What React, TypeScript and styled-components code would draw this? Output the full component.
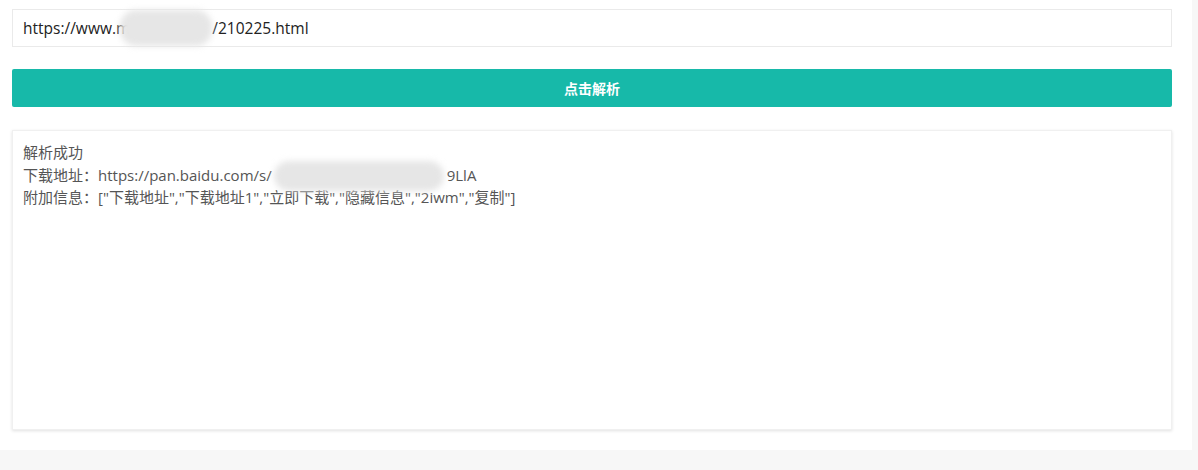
import React from "react";
import styled, { createGlobalStyle } from "styled-components";

const Global = createGlobalStyle`
  html, body { margin: 0; padding: 0; background: #f7f7f7; }
  body { font-family: "Open Sans", "Noto Sans CJK SC", sans-serif; }
`;

const Page = styled.div`
  width: 1198px;
  height: 470px;
  background: #f7f7f7;
`;

const Panel = styled.div`
  width: 1192px;
  height: 450px;
  background: #fff;
  box-sizing: border-box;
  padding: 9px 20px 0 12px;
  display: flex;
  flex-direction: column;
`;

const InputBox = styled.div`
  height: 38px;
  box-sizing: border-box;
  border: 1px solid #eaeaea;
  padding: 0 10px;
  display: flex;
  align-items: center;
  font-size: 15.5px;
  color: #222;
  white-space: nowrap;
  font-family: "Open Sans", "Noto Sans CJK SC", sans-serif;
`;

const Blob = styled.span<{ $w: number; $h: number; $ml: number; $mr: number }>`
  display: inline-block;
  position: relative;
  width: ${(p) => p.$w}px;
  height: ${(p) => p.$h}px;
  margin: -10px ${(p) => p.$mr}px -10px ${(p) => p.$ml}px;
  vertical-align: middle;
  background: #e6e6e6;
  border-radius: 16px;
  filter: blur(3px);
`;

const Button = styled.button`
  margin-top: 22px;
  height: 38px;
  border: none;
  border-radius: 2px;
  background: #17b9a9;
  color: #fff;
  font-size: 14px;
  font-weight: bold;
  font-family: "Noto Sans CJK SC", sans-serif;
  cursor: pointer;
`;

const Result = styled.div`
  margin-top: 23px;
  height: 300px;
  box-sizing: border-box;
  border: 1px solid #f0f0f0;
  box-shadow: 0 1px 3px rgba(0, 0, 0, 0.12);
  padding: 10px 10px;
  font-size: 15px;
  line-height: 22.5px;
  color: #555;
  font-family: "Open Sans", "Noto Sans CJK SC", sans-serif;
`;

const Line = styled.div`
  white-space: nowrap;
`;

export default function App() {
  return (
    <Page>
      <Global />
      <Panel>
        <InputBox>
          https://www.m<Blob $w={92} $h={36} $ml={-10} $mr={0} />/210225.html
        </InputBox>
        <Button>点击解析</Button>
        <Result>
          <Line>解析成功</Line>
          <Line>
            下载地址：https://pan.baidu.com/s/
            <Blob $w={170} $h={30} $ml={2} $mr={3} />
            9LlA
          </Line>
          <Line>
            附加信息：["下载地址","下载地址1","立即下载","隐藏信息","2iwm","复制"]
          </Line>
        </Result>
      </Panel>
    </Page>
  );
}
